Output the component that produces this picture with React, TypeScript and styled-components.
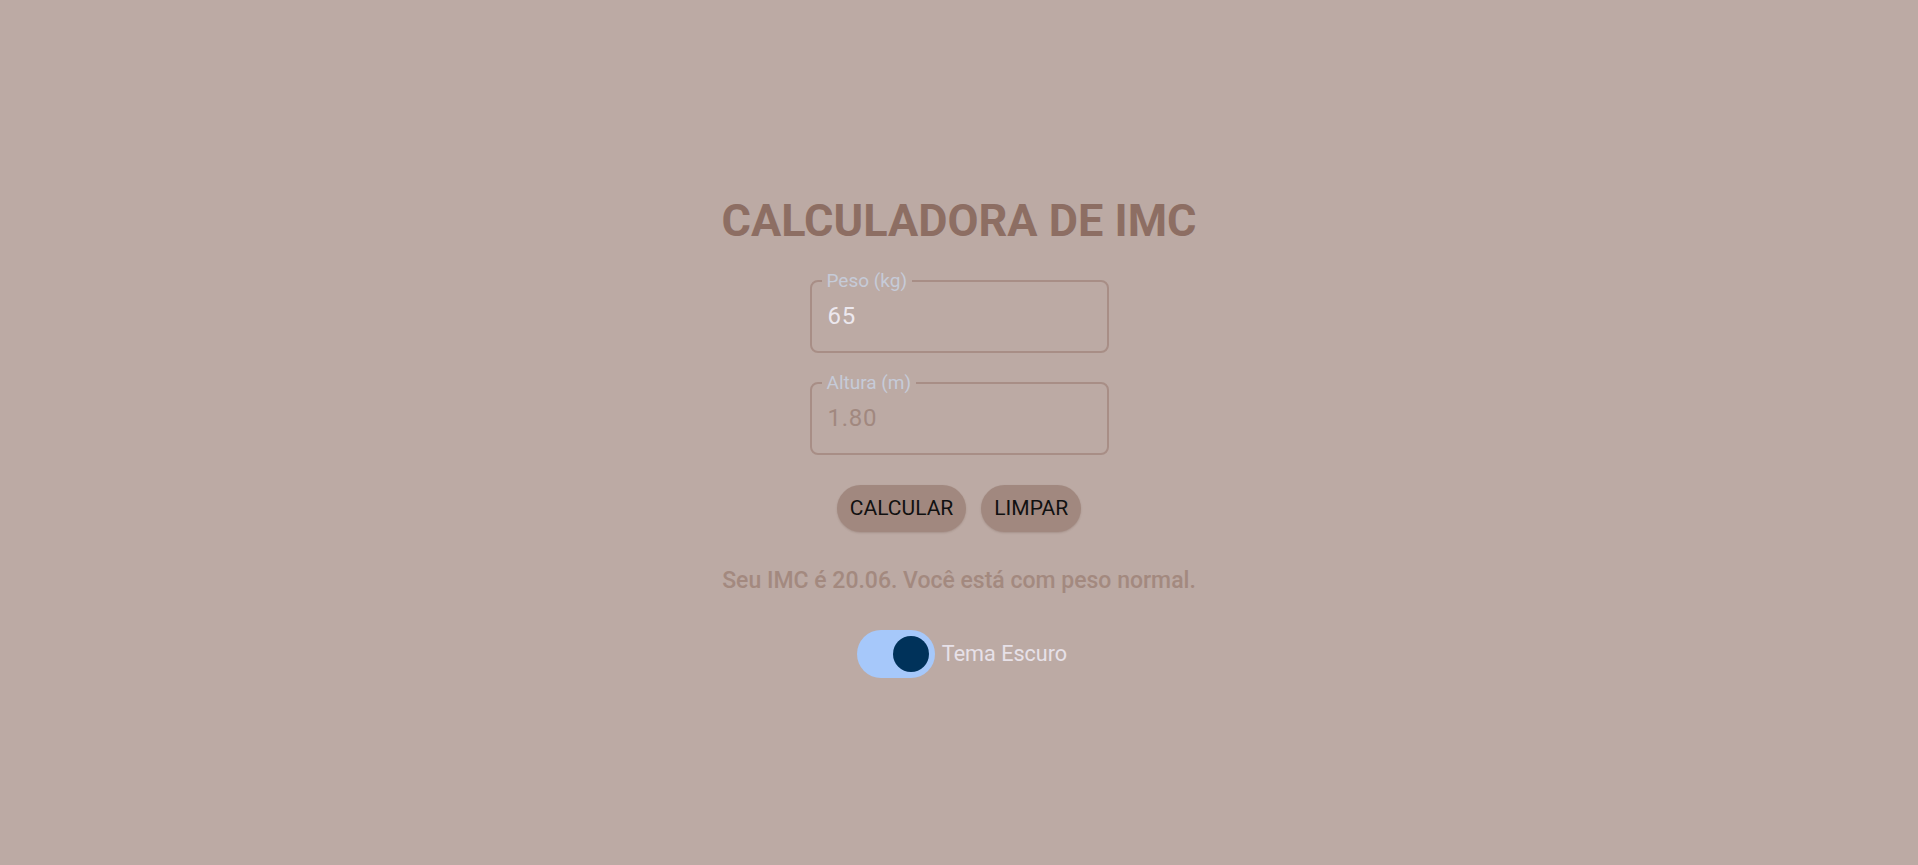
import React, { useState } from "react";
import styled, { createGlobalStyle } from "styled-components";

const GlobalStyle = createGlobalStyle`
  html, body { margin: 0; padding: 0; }
  body {
    background: #bcaaa4;
    font-family: Roboto, "Liberation Sans", Arial, sans-serif;
  }
`;

const Page = styled.main`
  min-height: 100vh;
  display: flex;
  flex-direction: column;
  align-items: center;
  justify-content: center;
  box-sizing: border-box;
  padding-top: 6px;
`;

const Title = styled.h1`
  margin: 0 0 23px;
  font-size: 45px;
  font-weight: 700;
  line-height: 54px;
  color: #8d6e63;
  letter-spacing: 0;
`;

const Form = styled.div`
  display: flex;
  flex-direction: column;
  align-items: center;
  gap: 20px;
`;

const Field = styled.fieldset`
  margin: 0;
  padding: 0 14px 0 16px;
  width: 299px;
  min-inline-size: 0;
  box-sizing: border-box;
  border: 2px solid #a88e86;
  border-radius: 8px;
  display: flex;
`;

const Legend = styled.legend`
  margin-left: -6px;
  padding: 0 5px;
  font-size: 19px;
  line-height: 20px;
  color: #c6cbd8;
`;

const Input = styled.input`
  flex: 1;
  width: 100%;
  min-width: 0;
  height: 51px;
  padding: 0 0 9px;
  border: none;
  outline: none;
  background: transparent;
  font-family: Roboto, "Liberation Sans", Arial, sans-serif;
  font-size: 24px;
  letter-spacing: 0.75px;
  color: #ece8ee;
  &::placeholder { color: #a1887f; }
`;

const Buttons = styled.div`
  display: flex;
  gap: 15px;
  margin-top: 10px;
`;

const Button = styled.button`
  height: 47px;
  padding: 0 13px;
  border: none;
  border-radius: 24px;
  background: #a1887f;
  color: #111;
  font-family: Roboto, "Liberation Sans", Arial, sans-serif;
  font-size: 21px;
  cursor: pointer;
  box-shadow: 0 1px 2px rgba(80, 50, 40, 0.2);
`;

const Result = styled.p`
  margin: 35px 0 0;
  font-size: 23px;
  font-weight: 500;
  color: #a3897f;
  line-height: 28px;
`;

const ToggleRow = styled.label`
  margin-top: 35px;
  display: flex;
  align-items: center;
  gap: 7px;
  cursor: pointer;
  margin-left: 6px;
`;

const Track = styled.span<{ $on: boolean }>`
  width: 78px;
  height: 48px;
  border-radius: 24px;
  box-sizing: border-box;
  background: ${(p) => (p.$on ? "#a6c8fa" : "#d8c8c4")};
  display: flex;
  align-items: center;
  justify-content: ${(p) => (p.$on ? "flex-end" : "flex-start")};
  padding: 0 6px;
`;

const Knob = styled.span`
  width: 36px;
  height: 36px;
  border-radius: 50%;
  background: #00325a;
`;

const ToggleText = styled.span`
  font-size: 21.6px;
  color: #e7e1e8;
`;

export default function App() {
  const [peso, setPeso] = useState("65");
  const [altura, setAltura] = useState("");
  const [dark, setDark] = useState(true);
  return (
    <>
      <GlobalStyle />
      <Page>
        <Title>CALCULADORA DE IMC</Title>
        <Form>
          <Field>
            <Legend>Peso (kg)</Legend>
            <Input value={peso} onChange={(e) => setPeso(e.target.value)} />
          </Field>
          <Field>
            <Legend>Altura (m)</Legend>
            <Input
              value={altura}
              placeholder="1.80"
              onChange={(e) => setAltura(e.target.value)}
            />
          </Field>
          <Buttons>
            <Button>CALCULAR</Button>
            <Button>LIMPAR</Button>
          </Buttons>
        </Form>
        <Result>Seu IMC é 20.06. Você está com peso normal.</Result>
        <ToggleRow onClick={() => setDark(!dark)}>
          <Track $on={dark}>
            <Knob />
          </Track>
          <ToggleText>Tema Escuro</ToggleText>
        </ToggleRow>
      </Page>
    </>
  );
}
